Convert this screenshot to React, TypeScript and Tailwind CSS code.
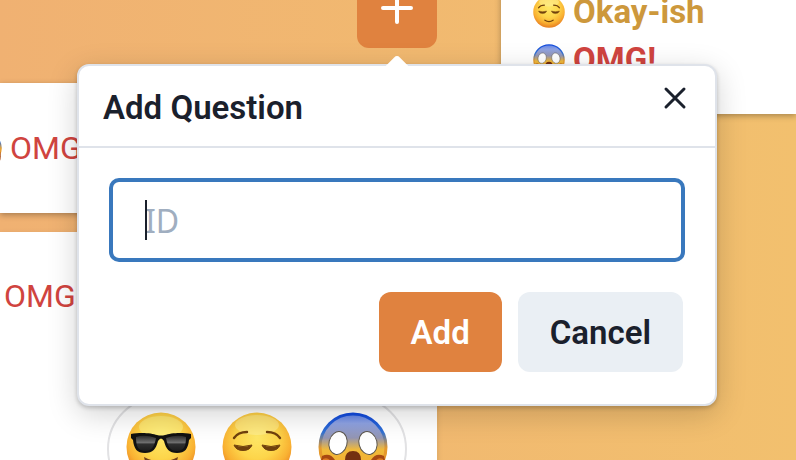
import React from "react";

type FaceProps = { className: string };

function FaceGradient({ id }: { id: string }) {
  return (
    <radialGradient id={id} cx="50%" cy="36%" r="62%">
      <stop offset="0%" stopColor="#fee767" />
      <stop offset="50%" stopColor="#fdd54a" />
      <stop offset="80%" stopColor="#f9b132" />
      <stop offset="100%" stopColor="#ea8424" />
    </radialGradient>
  );
}

function CoolFace({ className }: FaceProps) {
  const id = React.useId();
  return (
    <svg viewBox="0 0 70 70" className={className} aria-hidden="true">
      <defs>
        <FaceGradient id={id} />
        <linearGradient id={id + "l"} x1="0" y1="0" x2="0" y2="1">
          <stop offset="0%" stopColor="#2a2a2a" />
          <stop offset="45%" stopColor="#707070" />
          <stop offset="55%" stopColor="#303030" />
          <stop offset="100%" stopColor="#1c1c1c" />
        </linearGradient>
      </defs>
      <circle cx="35" cy="35" r="34.5" fill={`url(#${id})`} />
      <ellipse cx="35" cy="15" rx="22" ry="11" fill="#fff89a" opacity="0.45" />
      <path d="M5 22C14 20 26 21 31 23Q35 24 39 23C44 21 56 20 65 22V26L63 28C62 37 59 41 51 41C43 41 40 37 38 29Q35 24 32 29C30 37 27 41 19 41C11 41 8 37 7 28L5 26Z" fill="#111" />
      <path d="M10 25Q19 22 30 26C28 36 25 39 19 39C12 39 10 34 10 25Z" fill={`url(#${id}l)`} />
      <path d="M60 25Q51 22 40 26C42 36 45 39 51 39C58 39 60 34 60 25Z" fill={`url(#${id}l)`} />
      <path d="M18 45Q35 54 52 45Q49 60 35 60T18 45Z" fill="#70401a" />
      <path d="M22 49Q35 56 48 49L46 53Q35 57 24 53Z" fill="#fff" />
    </svg>
  );
}

function CalmFace({ className }: FaceProps) {
  const id = React.useId();
  return (
    <svg viewBox="0 0 70 70" className={className} aria-hidden="true">
      <defs>
        <FaceGradient id={id} />
      </defs>
      <circle cx="35" cy="35" r="34.5" fill={`url(#${id})`} />
      <ellipse cx="35" cy="13" rx="22" ry="10" fill="#fff4b0" opacity="0.4" />
      <g fill="none" stroke="#70410d" strokeWidth="2.4" strokeLinecap="round">
        <path d="M12 26Q16 20 25 20" />
        <path d="M58 26Q54 20 45 20" />
        <path d="M26 53Q35 59 44 53" strokeWidth="2.8" />
      </g>
      <path d="M12 33Q21 36 30 33Q28 38.500 21 38.500Q14 38.500 12 33Z" fill="#70410d" stroke="#70410d" strokeLinejoin="round" />
      <path d="M58 33Q49 36 40 33Q42 38.500 49 38.500Q56 38.500 58 33Z" fill="#70410d" stroke="#70410d" strokeLinejoin="round" />
    </svg>
  );
}

function ScreamFace({ className }: FaceProps) {
  const id = React.useId();
  return (
    <svg viewBox="0 0 70 70" className={className} aria-hidden="true">
      <defs>
        <linearGradient id={id} x1="0" y1="0" x2="0" y2="1">
          <stop offset="0%" stopColor="#5f83e8" />
          <stop offset="14%" stopColor="#8fa3e4" />
          <stop offset="36%" stopColor="#9496b4" />
          <stop offset="54%" stopColor="#f0b93a" />
          <stop offset="100%" stopColor="#f4a62a" />
        </linearGradient>
        <linearGradient id={id + "e"} x1="0" y1="0" x2="0" y2="1">
          <stop offset="0%" stopColor="#1149dc" />
          <stop offset="28%" stopColor="#3272d4" />
          <stop offset="52%" stopColor="#e59a2c" />
          <stop offset="100%" stopColor="#e5912a" />
        </linearGradient>
      </defs>
      <circle cx="35" cy="35" r="33" fill={`url(#${id})`} stroke={`url(#${id}e)`} strokeWidth="3" />
      <g fill="#fff" stroke="#5b554c" strokeWidth="1">
        <ellipse cx="20" cy="31" rx="9" ry="11.5" transform="rotate(14 20 31)" />
        <ellipse cx="50" cy="31" rx="9" ry="11.5" transform="rotate(-14 50 31)" />
      </g>
      <path d="M27 66V48Q27 39 35 39T43 48V66Z" fill="#733011" />
      <path d="M4 44Q12 40 17 48L23 70H8Q0 58 4 44Z" fill="#a84812" />
      <path d="M66 44Q58 40 53 48L47 70H62Q70 58 66 44Z" fill="#a84812" />
      <path d="M5 47Q11 44 14 52L19 70H9Q3 58 5 47Z" fill="#de7a24" />
      <path d="M65 47Q59 44 56 52L51 70H61Q67 58 65 47Z" fill="#de7a24" />
    </svg>
  );
}

function AddQuestionDialog() {
  return (
    <section
      role="dialog"
      aria-labelledby="dialog-title"
      className="absolute top-full left-1/2 z-10 mt-4 w-[640px] -translate-x-1/2 rounded-xl border-2 border-[#dfe3ea] bg-white text-[#1a202c] shadow-[0_2px_4px_rgba(0,0,0,0.2),0_8px_30px_rgba(0,0,0,0.18)]"
    >
      <span className="absolute -top-2 left-1/2 size-4 -translate-x-1/2 rotate-45 rounded-tl-sm bg-white" />
      <header className="flex h-[82px] items-start justify-between border-b-2 border-[#dfe3ea] pr-6 pl-6">
        <h2 id="dialog-title" className="pt-[22px] text-[33px] leading-10 font-semibold">
          Add Question
        </h2>
        <button type="button" aria-label="Close" className="mt-4 flex size-8 items-center justify-center">
          <svg viewBox="0 0 24 24" className="size-6" fill="none" stroke="currentColor" strokeWidth="3" strokeLinecap="round" aria-hidden="true">
            <path d="M3 3L21 21M21 3L3 21" />
          </svg>
        </button>
      </header>
      <form className="flex flex-col gap-8 p-8" onSubmit={(event) => event.preventDefault()}>
        <div className="relative">
          <input
            type="text"
            aria-label="ID"
            placeholder="ID"
            autoFocus
            className="block h-20 w-full rounded-lg border-2 border-[#3978bd] bg-white px-8 font-['Noto_Sans',sans-serif] text-[32px] caret-transparent ring-2 ring-[#3978bd] outline-none placeholder:text-[#a0aec0]"
          />
          <span className="absolute top-5 left-[34px] h-10 w-0.5 bg-[#1a202c]" />
        </div>
        <div className="flex justify-end gap-4 text-[33px] font-semibold">
          <button type="submit" className="h-20 rounded-xl bg-[#e0823f] px-8 pt-0.5 text-white">
            Add
          </button>
          <button type="button" className="h-20 rounded-xl bg-[#eaeff4] px-8 pt-0.5">
            Cancel
          </button>
        </div>
      </form>
    </section>
  );
}

export default function App() {
  return (
    <main className="flex h-screen items-start gap-16 overflow-hidden bg-linear-to-r from-[#f0b172] to-[#f2c06e] font-[Roboto,sans-serif]">
      <div className="w-[437px] shrink-0">
        <div className="flex justify-end">
          <div className="relative">
            <button type="button" aria-label="Add question" className="flex h-12 w-20 items-end justify-center rounded-b-xl bg-[#e0823f] pb-6 text-white">
              <svg viewBox="0 0 32 32" className="size-8 shrink-0" fill="none" stroke="currentColor" strokeWidth="4" strokeLinecap="round" aria-hidden="true">
                <path d="M16 2V30M2 16H30" />
              </svg>
            </button>
            <AddQuestionDialog />
          </div>
        </div>
        <div className="mt-[35px] flex flex-col gap-[19px] text-[32px] leading-10 font-normal text-[#d0443f]">
          <article className="flex h-[130px] items-center gap-2 bg-white shadow-[0_2px_6px_rgba(0,0,0,0.3)]">
            <ScreamFace className="-ml-[30px] size-8 shrink-0" />
            <span>OMG</span>
          </article>
          <article className="bg-white pt-11 pb-4 shadow-[0_2px_6px_rgba(0,0,0,0.12)]">
            <p className="pl-1">OMG</p>
            <div className="mt-20 mr-[30px] ml-auto flex h-[106px] w-[300px] items-center justify-between rounded-full border-2 border-[#e2e2e4] px-[17px] pb-1">
              <CoolFace className="size-[70px]" />
              <CalmFace className="size-[70px]" />
              <ScreamFace className="size-[70px]" />
            </div>
          </article>
        </div>
      </div>
      <aside className="-mt-2 h-[122px] flex-1 bg-white pl-8 text-[33px] leading-[48px] font-bold shadow-[0_2px_6px_rgba(0,0,0,0.3)]">
        <p className="-mt-1 flex items-center gap-2 text-[#cd983c]">
          <CalmFace className="size-8 shrink-0" />
          Okay-ish
        </p>
        <p className="flex items-center gap-2 text-[#d0443f]">
          <ScreamFace className="size-8 shrink-0" />
          OMG!
        </p>
      </aside>
    </main>
  );
}
